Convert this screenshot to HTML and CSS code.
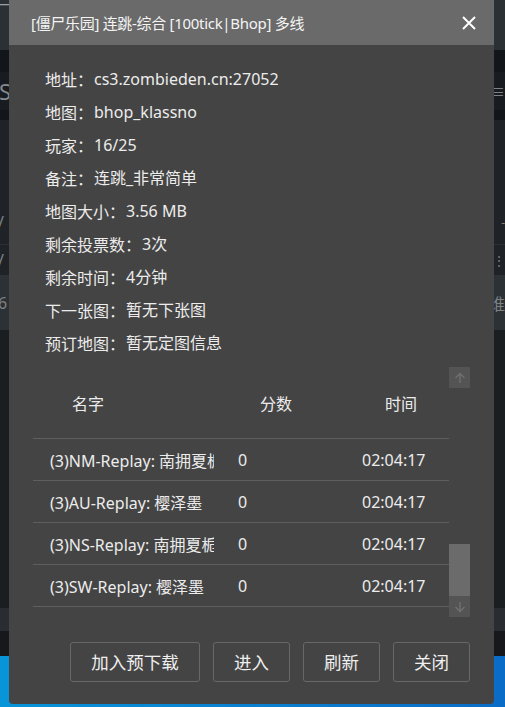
FILE: index.html
```html
<!DOCTYPE html>
<html lang="zh-CN">
<head>
<meta charset="utf-8">
<title>服务器信息</title>
<link rel="stylesheet" href="styles.css">
</head>
<body>
<div class="app">
  <div class="band b1"><span class="glyph-l dash">—</span></div>
  <div class="band b2"></div>
  <div class="band b3"><span class="glyph-l big">SC</span><span class="glyph-r">≡</span></div>
  <div class="band b4"></div>
  <div class="band b5"></div>
  <div class="band b6"><span class="glyph-l">/</span><span class="glyph-r tick">-</span></div>
  <div class="band b7"><span class="glyph-l">/</span><span class="glyph-r tick">⋮</span></div>
  <div class="band b8"><span class="glyph-l">6</span><span class="glyph-r">谁</span></div>
  <div class="band b9"></div>
  <div class="band b10"></div>
  <div class="band b11"></div>
  <div class="band b12"></div>
</div>

<div class="dialog">
  <div class="titlebar">
    <span class="title">[僵尸乐园] 连跳-综合 [100tick|Bhop] 多线</span>
    <span class="close" aria-label="关闭">
      <svg width="14" height="14" viewBox="0 0 14 14"><path d="M1 1L13 13M13 1L1 13" stroke="#ffffff" stroke-width="2" fill="none"/></svg>
    </span>
  </div>
  <div class="body">
    <div class="info">
      <div class="row"><span class="label">地址：</span><span class="value">cs3.zombieden.cn:27052</span></div>
      <div class="row"><span class="label">地图：</span><span class="value">bhop_klassno</span></div>
      <div class="row"><span class="label">玩家：</span><span class="value">16/25</span></div>
      <div class="row"><span class="label">备注：</span><span class="value">连跳_非常简单</span></div>
      <div class="row"><span class="label">地图大小：</span><span class="value">3.56 MB</span></div>
      <div class="row"><span class="label">剩余投票数：</span><span class="value">3次</span></div>
      <div class="row"><span class="label">剩余时间：</span><span class="value">4分钟</span></div>
      <div class="row"><span class="label">下一张图：</span><span class="value">暂无下张图</span></div>
      <div class="row"><span class="label">预订地图：</span><span class="value">暂无定图信息</span></div>
    </div>

    <div class="players">
      <div class="table">
        <div class="thead">
          <span class="th th-name">名字</span>
          <span class="th th-score">分数</span>
          <span class="th th-time">时间</span>
        </div>
        <div class="tr"><span class="td td-name">(3)NM-Replay: 南拥夏栀</span><span class="td">0</span><span class="td">02:04:17</span></div>
        <div class="tr"><span class="td td-name">(3)AU-Replay: 樱泽墨</span><span class="td">0</span><span class="td">02:04:17</span></div>
        <div class="tr"><span class="td td-name">(3)NS-Replay: 南拥夏栀</span><span class="td">0</span><span class="td">02:04:17</span></div>
        <div class="tr"><span class="td td-name">(3)SW-Replay: 樱泽墨</span><span class="td">0</span><span class="td">02:04:17</span></div>
      </div>
      <div class="scrollbar">
        <span class="sb-btn"><svg width="12" height="12" viewBox="0 0 12 12"><path d="M6 11V1.5M1.5 6L6 1.5L10.5 6" stroke="#707070" stroke-width="1.4" fill="none"/></svg></span>
        <span class="sb-track"></span>
        <span class="sb-thumb"></span>
        <span class="sb-btn"><svg width="12" height="12" viewBox="0 0 12 12"><path d="M6 1V10.5M1.5 6L6 10.5L10.5 6" stroke="#707070" stroke-width="1.4" fill="none"/></svg></span>
      </div>
    </div>

    <div class="actions">
      <button class="btn wide">加入预下载</button>
      <button class="btn">进入</button>
      <button class="btn">刷新</button>
      <button class="btn">关闭</button>
    </div>
  </div>
</div>
</body>
</html>
```

FILE: styles.css
```css
html, body {
  margin: 0;
  padding: 0;
}
body {
  width: 505px;
  height: 707px;
  overflow: hidden;
  position: relative;
  font-family: "Noto Sans", "Noto Sans CJK SC", sans-serif;
  background: #1c1f22;
}

/* background application (dimmed) */
.app {
  display: flex;
  flex-direction: column;
  height: 707px;
}
.band {
  display: flex;
  justify-content: space-between;
  align-items: center;
  color: #7d8287;
  font-size: 16px;
  overflow: hidden;
}
.glyph-l { margin-left: -2px; }
.glyph-r { margin-right: 0; }
.glyph-l.big { font-size: 22px; margin-left: -1px; color: #858a8f; }
.glyph-l.dash { align-self: flex-start; margin-top: -6px; font-size: 14px; color: #9aa0a5; }
.tick { font-size: 12px; }
.b1 { height: 50px; background: #2b3035; }
.b2 { height: 22px; background: #121519; }
.b3 { height: 38px; background: #181c20; }
.b4 { height: 10px; background: #121519; }
.b5 { height: 80px; background: #1f2327; }
.b6 { height: 44px; background: #1f2327; border-bottom: 1px solid #2c3034; }
.b7 { height: 30px; background: #1f2327; }
.b8 { height: 55px; background: #2c3135; }
.b9 { height: 278px; background: #1b1e21; }
.b10 { height: 23px; background: #292d31; }
.b11 { height: 25px; background: #16181b; }
.b12 { height: 51px; background: linear-gradient(90deg, #0794d8 0%, #0a80d0 50%, #0a6cc6 100%); }

/* modal dialog */
.dialog {
  position: absolute;
  left: 9px;
  top: 0;
  width: 485px;
  height: 704px;
  background: #444444;
  border-radius: 0 0 4px 4px;
  display: flex;
  flex-direction: column;
  color: #ececec;
  font-family: "Noto Sans", "Noto Sans CJK SC", sans-serif;
}
.titlebar {
  height: 45px;
  background: #6a6a6a;
  display: flex;
  align-items: center;
  justify-content: space-between;
  padding: 0 18px 0 22px;
}
.title {
  font-size: 15px;
  color: #f4f4f4;
  white-space: nowrap;
  letter-spacing: -0.3px;
}
.close {
  display: flex;
  width: 14px;
  height: 14px;
}

.body {
  display: flex;
  flex-direction: column;
  padding: 18px 24px 0 24px;
}

.info {
  display: flex;
  flex-direction: column;
  padding-left: 12px;
}
.row {
  display: flex;
  height: 33px;
  line-height: 33px;
  font-size: 16px;
  white-space: nowrap;
}
.label {
  font-family: "Noto Sans CJK SC", sans-serif;
}
.value { margin-left: 1px; }

.players {
  margin-top: 7px;
  height: 250px;
  display: grid;
  grid-template-columns: 416px 21px;
}
.table {
  display: flex;
  flex-direction: column;
}
.thead, .tr {
  display: grid;
  grid-template-columns: 205px 124px 87px;
  align-items: center;
  border-bottom: 1px solid #5e5e5e;
  font-size: 16px;
}
.thead {
  height: 71px;
}
.tr {
  height: 41px;
}
.th-name { padding-left: 39px; }
.th-score { padding-left: 22px; }
.th-time { padding-left: 23px; }
.td {
  white-space: nowrap;
}
.td-name {
  padding-left: 17px;
  overflow: hidden;
  text-overflow: clip;
  margin-right: 24px;
}

.scrollbar {
  display: flex;
  flex-direction: column;
  height: 250px;
}
.sb-btn {
  height: 21px;
  background: #545454;
  display: flex;
  align-items: center;
  justify-content: center;
  flex: none;
}
.sb-track { flex: 1; }
.sb-thumb {
  height: 52px;
  background: #6b6b6b;
  flex: none;
}

.actions {
  margin-top: 25px;
  display: flex;
  justify-content: flex-end;
  gap: 13px;
}
.btn {
  height: 40px;
  width: 77px;
  background: transparent;
  border: 1px solid #686868;
  border-radius: 3px;
  color: #efefef;
  font-family: "Noto Sans CJK SC", sans-serif;
  font-size: 17.5px;
  padding: 0;
  line-height: 38px;
}
.btn.wide { width: 130px; }
```
